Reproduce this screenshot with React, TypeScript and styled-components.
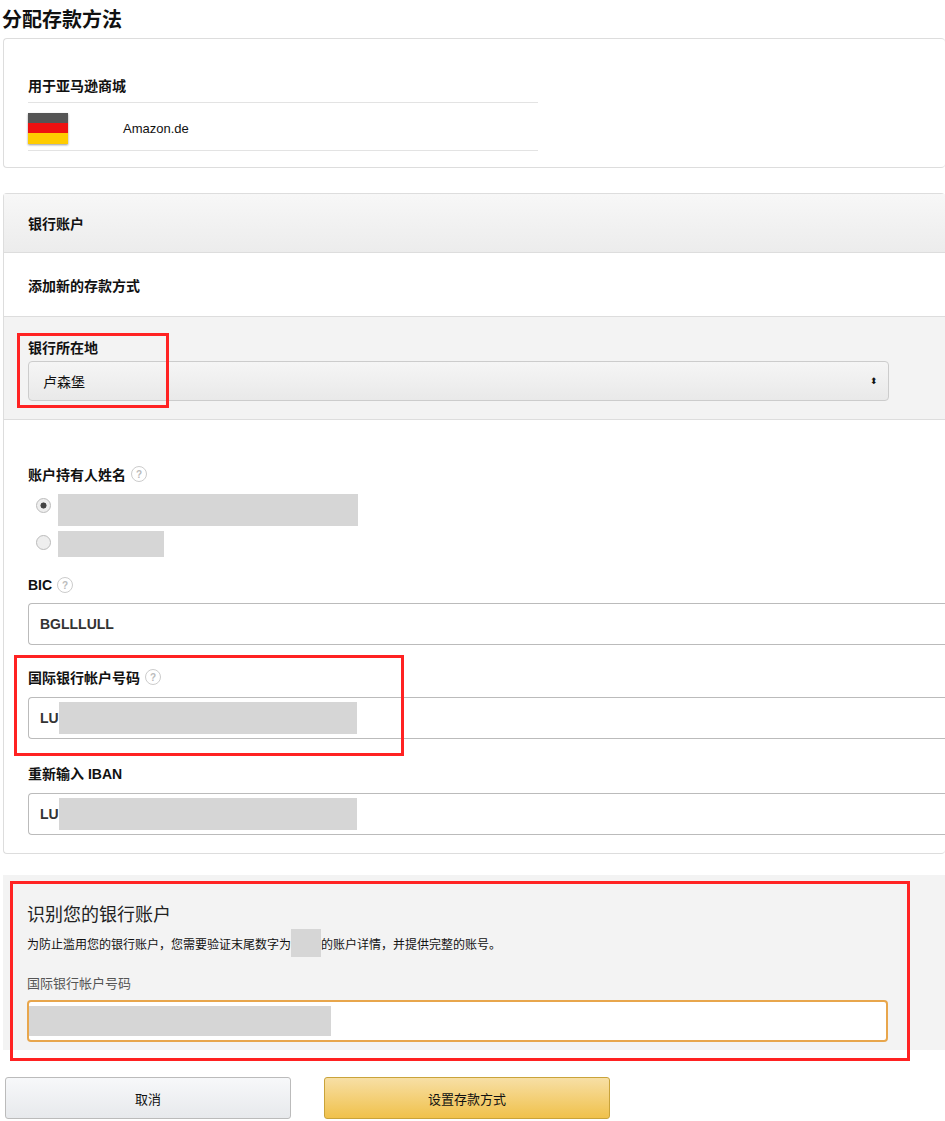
import React from "react";
import styled, { createGlobalStyle } from "styled-components";

const G = createGlobalStyle`
  body { margin: 0; background: #fff; font-family: "Liberation Sans", "Noto Sans CJK SC", sans-serif; color: #111; }
`;
const Page = styled.div`width: 945px; height: 1121px; overflow: hidden; position: relative;`;
const Title = styled.h1`margin: 0; padding: 4px 0 0 2px; font-size: 20px; font-weight: bold; height: 34px; box-sizing: border-box;`;
const Card = styled.div`margin: 4px 0 0 3px; border: 1px solid #ddd; border-radius: 4px; border-right: none; padding: 36px 0 20px 24px; height: 130px; box-sizing: border-box;`;
const SubLabel = styled.div`font-size: 14px; font-weight: bold; width: 510px; padding-bottom: 7px; border-bottom: 1px solid #e3e3e3;`;
const FlagRow = styled.div`display: flex; align-items: center; width: 510px; height: 48px; border-bottom: 1px solid #e3e3e3; font-size: 13px; padding-top: 4px; box-sizing: border-box;`;
const Flag = styled.div`width: 40px; height: 31px; margin-right: 55px; background: linear-gradient(#555 0 33%, #e11 33% 66%, #fc0 66%); box-shadow: 0 1px 2px #999;`;
const Card2 = styled.div`margin: 25px 0 0 3px; border: 1px solid #ddd; border-right: none; border-radius: 4px; height: 661px; box-sizing: border-box;`;
const Head = styled.div<{ $bg: string; $h: number }>`height: ${p => p.$h}px; background: ${p => p.$bg}; display: flex; align-items: center; padding-left: 24px; font-size: 14px; font-weight: bold; border-bottom: 1px solid #ddd;`;
const GraySec = styled.div`background: #f3f3f3; padding: 20px 56px 18px 24px; border-bottom: 1px solid #ddd; position: relative;`;
const Label = styled.div`font-size: 14px; font-weight: bold; display: flex; align-items: center; gap: 5px; margin-bottom: 4px;`;
const Select = styled.div`height: 40px; border: 1px solid #ccc; border-radius: 4px; background: linear-gradient(#f5f5f5,#e9e9e9); display: flex; align-items: center; justify-content: space-between; padding: 0 10px 0 14px; font-size: 14px; box-sizing: border-box;`;
const Body = styled.div`padding: 44px 0 0 24px;`;
const Help = styled.span`display: inline-flex; width: 14px; height: 14px; border-radius: 50%; border: 1.5px solid #ccc; color: #bbb; font-size: 10px; font-weight: bold; align-items: center; justify-content: center;`;
const RadioRow = styled.div<{ $h: number }>`display: flex; align-items: flex-start; gap: 7px; height: ${p => p.$h}px; padding-left: 8px;`;
const Radio = styled.span<{ $on?: boolean }>`width: 13px; height: 13px; margin-top: 4px; border-radius: 50%; border: 1px solid #bbb; background: ${p => p.$on ? "radial-gradient(#444 0 30%, #eee 36%)" : "#eee"};`;
const Mask = styled.span<{ $w: number; $h: number }>`display: inline-block; width: ${p => p.$w}px; height: ${p => p.$h}px; background: #d6d6d6;`;
const Field = styled.div<{ $mt: number }>`margin-top: ${p => p.$mt}px; position: relative;`;
const Input = styled.div`height: 42px; border: 1px solid #bbb; border-right: none; border-radius: 4px 0 0 4px; display: flex; align-items: center; padding-left: 11px; font-size: 14px; font-weight: bold; color: #333; box-sizing: border-box; margin-top: 10px;`;
const Red = styled.div<{ $l: number; $t: number; $w: number; $h: number }>`position: absolute; left: ${p => p.$l}px; top: ${p => p.$t}px; width: ${p => p.$w}px; height: ${p => p.$h}px; border: 3px solid #f22; box-sizing: border-box; pointer-events: none;`;
const Verify = styled.div`margin: 21px 0 0 3px; background: #f3f3f3; height: 175px; box-sizing: border-box; padding: 25px 57px 0 24px; position: relative;`;
const VTitle = styled.div`font-size: 18px; color: #222;`;
const VDesc = styled.div`font-size: 12px; margin-top: 3px; display: flex; align-items: center;`;
const VLabel = styled.div`font-size: 13px; color: #555; margin-top: 16px;`;
const VInput = styled.div`height: 42px; border: 2px solid #e8a64c; border-radius: 4px; background: #fff; margin-top: 8px; display: flex; align-items: center; box-sizing: border-box;`;
const Buttons = styled.div`display: flex; gap: 33px; margin-top: 27px; padding-left: 5px;`;
const Btn = styled.div<{ $gold?: boolean }>`width: 286px; height: 42px; border: 1px solid ${p => p.$gold ? "#c9a33a" : "#bbb"}; border-radius: 3px; background: ${p => p.$gold ? "linear-gradient(#f7dfa5,#f0c14b)" : "linear-gradient(#f7f8fa,#e7e9ec)"}; display: flex; align-items: center; justify-content: center; font-size: 13px; box-sizing: border-box;`;

export default function App() {
  return (
    <Page>
      <G />
      <Title>分配存款方法</Title>
      <Card>
        <SubLabel>用于亚马逊商城</SubLabel>
        <FlagRow><Flag />Amazon.de</FlagRow>
      </Card>
      <Card2>
        <Head $bg="linear-gradient(#f7f7f7,#ececec)" $h={58}>银行账户</Head>
        <Head $bg="#fff" $h={63}>添加新的存款方式</Head>
        <GraySec>
          <Label>银行所在地</Label>
          <Select>卢森堡<span style={{ fontSize: 9 }}>⬍</span></Select>
          <Red $l={13} $t={16} $w={152} $h={75} />
        </GraySec>
        <Body>
          <Label>账户持有人姓名 <Help>?</Help></Label>
          <div style={{ marginTop: 10 }}>
            <RadioRow $h={37}><Radio $on /><Mask $w={300} $h={32} /></RadioRow>
            <RadioRow $h={26}><Radio /><Mask $w={106} $h={26} /></RadioRow>
          </div>
          <Field $mt={20}>
            <Label>BIC <Help>?</Help></Label>
            <Input>BGLLLULL</Input>
          </Field>
          <Field $mt={22}>
            <Label>国际银行帐户号码 <Help>?</Help></Label>
            <Input>LU<Mask $w={298} $h={32} /></Input>
            <Red $l={-14} $t={-12} $w={390} $h={101} />
          </Field>
          <Field $mt={24}>
            <Label>重新输入 IBAN</Label>
            <Input>LU<Mask $w={298} $h={32} /></Input>
          </Field>
        </Body>
      </Card2>
      <Verify>
        <VTitle>识别您的银行账户</VTitle>
        <VDesc>为防止滥用您的银行账户，您需要验证末尾数字为<Mask $w={30} $h={28} />的账户详情，并提供完整的账号。</VDesc>
        <VLabel>国际银行帐户号码</VLabel>
        <VInput><Mask $w={302} $h={30} /></VInput>
        <Red $l={7} $t={6} $w={900} $h={180} />
      </Verify>
      <Buttons>
        <Btn>取消</Btn>
        <Btn $gold>设置存款方式</Btn>
      </Buttons>
    </Page>
  );
}
